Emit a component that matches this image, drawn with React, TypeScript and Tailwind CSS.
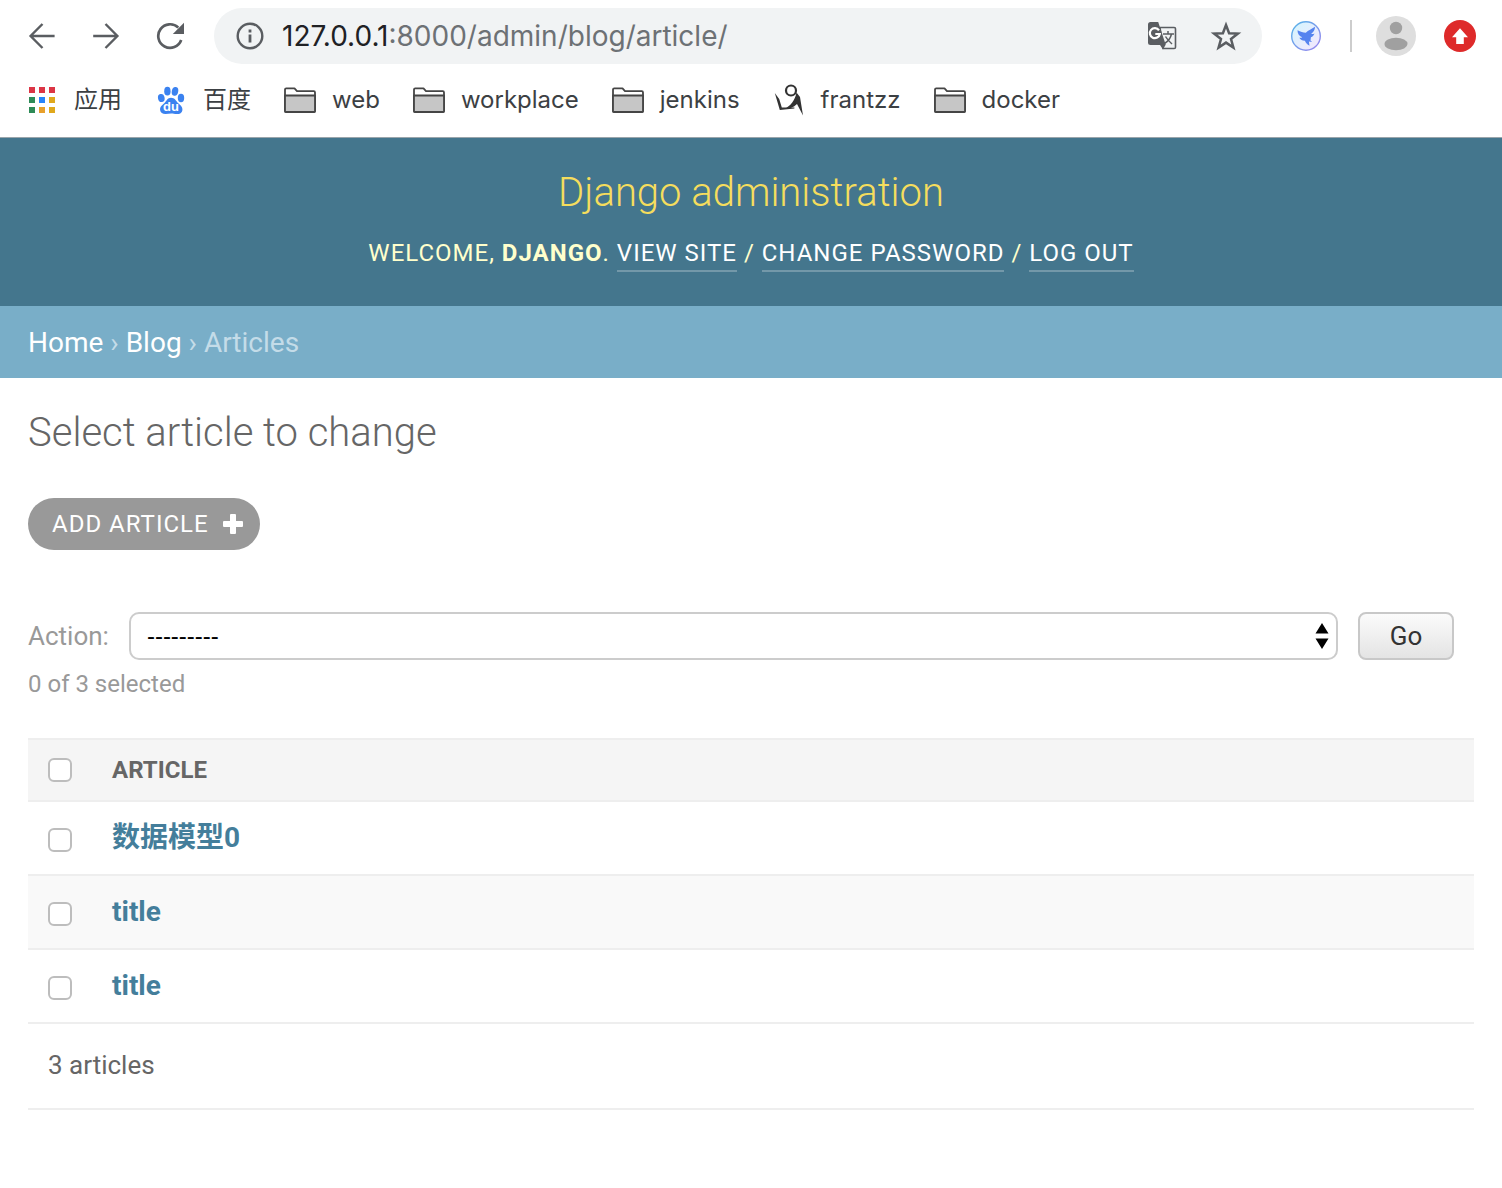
import React from 'react';

const articles = [
  { id: 3, title: '数据模型0' },
  { id: 2, title: 'title' },
  { id: 1, title: 'title' },
];

const appColors = ['#dc3545', '#dc3545', '#dc3545', '#2e8b57', '#2684fc', '#e0a81c', '#2e8b57', '#e8a02c', '#e0a81c'];

function AppsIcon() {
  return (
    <svg viewBox="0 0 32 32" className="h-8 w-8 shrink-0">
      {appColors.map((c, i) => (
        <rect key={i} x={3 + (i % 3) * 10} y={3 + Math.floor(i / 3) * 10} width="6" height="6" fill={c} />
      ))}
    </svg>
  );
}

function BaiduIcon() {
  return (
    <svg viewBox="0 0 32 32" className="h-8 w-8 shrink-0">
      <g fill="#3b82f0">
        <ellipse cx="6.3" cy="14" rx="3.3" ry="4.1" transform="rotate(-12 6.3 14)" />
        <ellipse cx="12.4" cy="7.2" rx="3.2" ry="4.4" />
        <ellipse cx="20" cy="7.4" rx="3.2" ry="4.4" transform="rotate(12 20 7.4)" />
        <ellipse cx="26" cy="14" rx="3.2" ry="4.2" />
        <path d="M16 13.800c3.800 0 5 3.200 7 5.300 2.200 2 4.800 3.700 4.400 7.100-.4 3-3.100 4.100-5.800 3.900-2-.1-3.500-.6-5.400-.6s-3.600.5-5.500.6c-2.900.1-5.300-1.200-5.600-4.100-.3-3.300 2.200-4.900 4.400-6.900 2-2.100 3.100-5.300 6.500-5.300z" />
      </g>
      <text x="16" y="27" textAnchor="middle" fontSize="13" fontWeight="700" fontFamily="Liberation Sans, sans-serif" fill="#fff">du</text>
    </svg>
  );
}

function FolderIcon() {
  return (
    <svg viewBox="0 0 32 32" className="h-8 w-8 shrink-0" stroke="#454545" strokeWidth="1.8" strokeLinejoin="round">
      <path d="M1 27V5.500Q1 4.400 2.200 4.400H10.500L13 7.200H29.800Q31 7.200 31 8.400V27Q31 28 29.800 28H2.200Q1 28 1 27z" fill="#fff" />
      <path d="M1 11.500H31V27Q31 28 29.800 28H2.200Q1 28 1 27z" fill="#c6c6c6" />
    </svg>
  );
}

function FigureIcon() {
  return (
    <svg viewBox="0 0 32 32" className="h-8 w-8 shrink-0" fill="#333">
      <circle cx="18" cy="6.500" r="5" fill="none" stroke="#333" strokeWidth="2.200" />
      <path d="M1.800 9l4.400 6 2.600 8.600 12.600-.2v1.200L6.800 26z" />
      <path d="M23.500 8.500L27 13l3 18.500-6-11.600c-3.400 3.400-7.400 4.800-12.600 5.200 5.800-3 10.600-8.600 12.100-16.600z" />
    </svg>
  );
}

const bookmarks = [
  { label: '应用', Icon: AppsIcon },
  { label: '百度', Icon: BaiduIcon },
  { label: 'web', Icon: FolderIcon },
  { label: 'workplace', Icon: FolderIcon },
  { label: 'jenkins', Icon: FolderIcon },
  { label: 'frantzz', Icon: FigureIcon },
  { label: 'docker', Icon: FolderIcon },
];

function BrowserBar() {
  return (
    <div className="border-b border-[#9aa5ab] bg-white font-['Inter','Noto_Sans_CJK_SC',sans-serif]">
      <div className="flex h-[72px] items-center pr-[26px] pl-7">
        <div className="flex shrink-0 gap-9">
          <button type="button" aria-label="Back">
            <svg viewBox="0 0 28 28" className="h-7 w-7" fill="none" stroke="#5a5d61" strokeWidth="2.4">
              <path d="M26.600 14H3M14.500 2L2.600 14l11.900 12" />
            </svg>
          </button>
          <button type="button" aria-label="Forward">
            <svg viewBox="0 0 28 28" className="h-7 w-7" fill="none" stroke="#5a5d61" strokeWidth="2.4">
              <path d="M1.200 14h24M13.500 2l11.900 12-11.900 12" />
            </svg>
          </button>
          <button type="button" aria-label="Reload">
            <svg viewBox="0 0 28 28" className="h-7 w-7">
              <path d="M25.200 18A11.800 11.800 0 1 1 22.300 5.600" fill="none" stroke="#5a5d61" strokeWidth="2.700" />
              <path d="M28 .8V12H16.800z" fill="#5a5d61" />
            </svg>
          </button>
        </div>

        <div className="ml-[30px] flex h-14 min-w-0 flex-1 items-center rounded-full bg-[#f1f3f4] pr-5 pl-[22px]">
          <svg viewBox="0 0 28 28" className="h-7 w-7 shrink-0" fill="#5a5d61">
            <circle cx="14" cy="14" r="12.3" fill="none" stroke="#5a5d61" strokeWidth="2.4" />
            <path d="M12.600 7.600h2.800v2.800h-2.800zM12.600 12.600h2.800v8h-2.800z" />
          </svg>
          <div className="ml-[18px] flex-1 text-[28px] leading-8 text-[#6d7175]">
            <span className="text-[#202124]">127.0.0.1</span>:8000/admin/blog/article/
          </div>
          <button type="button" aria-label="Translate this page">
            <svg viewBox="0 0 32 32" className="h-8 w-8">
              <path d="M14 7.500h14.200q1.300 0 1.300 1.300v18.400q0 1.300-1.300 1.300H17z" fill="#f1f3f4" stroke="#5a5d61" strokeWidth="1.600" />
              <path d="M4.500 2h7.700l7.600 23H4.500Q2 25 2 22.500v-18Q2 2 4.500 2z" fill="#5a5d61" />
              <path d="M14 25h5.500L17 29.500z" fill="#5a5d61" />
              <path d="M13 10.300A5 5 0 1 0 13.800 14H9.300" fill="none" stroke="#fff" strokeWidth="2.200" />
              <path d="M17 14h11M22 11v3M25.500 14c-1 4.300-3.600 7.500-7 9.500M19.500 16.500c1.700 3 3.800 5 6.500 7.500" fill="none" stroke="#5a5d61" strokeWidth="1.500" />
            </svg>
          </button>
          <button type="button" aria-label="Bookmark this page" className="ml-8">
            <svg viewBox="0 0 32 32" className="h-8 w-8" fill="none" stroke="#5a5d61" strokeWidth="2.5">
              <path d="M16 5l3.100 8.200 8.800.4-6.900 5.400 2.400 8.500-7.400-4.900-7.400 4.900L11 19l-6.900-5.400 8.800-.4z" />
            </svg>
          </button>
        </div>

        <button type="button" aria-label="Bird extension" className="ml-7 shrink-0">
          <svg viewBox="0 0 32 32" className="h-8 w-8">
            <defs>
              <linearGradient id="ring" x1="0" y1="0" x2="1" y2="1">
                <stop offset="0" stopColor="#55b5e8" />
                <stop offset="1" stopColor="#9a83ee" />
              </linearGradient>
              <linearGradient id="disc" x1="0" y1="0" x2="1" y2="1">
                <stop offset="0" stopColor="#d3f6fe" />
                <stop offset="1" stopColor="#f6e6fd" />
              </linearGradient>
            </defs>
            <circle cx="16" cy="16" r="14.3" fill="url(#disc)" stroke="url(#ring)" strokeWidth="1.4" />
            <path d="M7.500 10.200c3 1.800 5.600 2.300 8.300 2.600 2.500-2.400 5.700-3.700 9.300-6-.2 3.400-1.800 5.500-4 7.100 1.200.2 2.400 0 3.400-.5-.8 2-1.900 3.200-3.600 3.900l-.400 3.200 1.600 1.600-3.200-.7.6 4.300c-2.300-1.300-3.800-2.900-4.600-5-2.400.1-4.400-1-5.600-3 1.200.2 2 .1 2.900-.5-2.800-1.300-4.700-3.200-4.700-7z" fill="#5684ef" />
          </svg>
        </button>
        <div className="ml-7 h-8 w-0.5 shrink-0 bg-[#cdcdcd]" />
        <button type="button" aria-label="Profile" className="ml-6 shrink-0">
          <svg viewBox="0 0 40 40" className="h-10 w-10">
            <circle cx="20" cy="20" r="20" fill="#dedede" />
            <circle cx="20" cy="12" r="6.2" fill="#a0a0a0" />
            <ellipse cx="20" cy="28" rx="11.5" ry="6.2" fill="#a0a0a0" />
          </svg>
        </button>
        <button type="button" aria-label="Update available" className="ml-7 shrink-0">
          <svg viewBox="0 0 32 32" className="h-8 w-8">
            <circle cx="16" cy="16" r="16" fill="#de2a2a" />
            <path d="M16 8.300l8 9h-4.200V24h-7.600v-6.700H8z" fill="#fff" />
          </svg>
        </button>
      </div>

      <nav className="flex h-[65px] items-start gap-[33px] px-[26px] pt-3">
        {bookmarks.map(({ label, Icon }) => (
          <a key={label} href="#" className="flex items-center gap-4 text-2xl leading-8 whitespace-nowrap text-[#3c4043]">
            <Icon />
            {label}
          </a>
        ))}
      </nav>
    </div>
  );
}

function SiteHeader() {
  const link = 'border-b-2 border-white/25 pb-[3px] text-white';
  return (
    <header className="bg-[#44768d] pt-[31px] pb-[34px] text-center">
      <h1 className="text-[40px] leading-12 font-light text-[#f5dd5d]">
        <a href="#">Django administration</a>
      </h1>
      <div className="mt-[17px] h-[38px] text-2xl leading-[38px] tracking-[1px] text-[#ffffcc] uppercase">
        Welcome, <strong className="font-bold">Django</strong>.{' '}
        <a href="#" className={link}>View site</a> /{' '}
        <a href="#" className={link}>Change password</a> /{' '}
        <a href="#" className={link}>Log out</a>
      </div>
    </header>
  );
}

function Checkbox({ label }: { label: string }) {
  return (
    <input
      type="checkbox"
      aria-label={label}
      className="block h-6 w-6 appearance-none rounded-md border-2 border-[#bdbdbd] bg-white checked:bg-[#79aec8]"
    />
  );
}

function ArticleTable() {
  return (
    <table className="w-full border-collapse text-left">
      <thead>
        <tr className="h-[62px] border-y-2 border-[#eee] bg-[#f5f5f5] text-2xl text-[#666]">
          <th className="w-16 pl-5"><Checkbox label="Select all articles" /></th>
          <th className="pl-5 font-bold">ARTICLE</th>
        </tr>
      </thead>
      <tbody>
        {articles.map((a) => (
          <tr key={a.id} className="h-[74px] border-b-2 border-[#eee] even:bg-[#f9f9f9]">
            <td className="pt-1 pl-5"><Checkbox label={`Select ${a.title}`} /></td>
            <th className="pl-5 text-[28px] leading-8 font-bold text-[#447e9b]">
              <a href="#">{a.title}</a>
            </th>
          </tr>
        ))}
      </tbody>
    </table>
  );
}

export default function App() {
  return (
    <div className="min-h-screen bg-white font-['Roboto','Noto_Sans_CJK_SC',sans-serif]">
      <BrowserBar />
      <SiteHeader />

      <nav className="bg-[#79aec8] pt-[21px] pb-[19px] px-7 text-[28px] leading-8 text-[#c4dce8]">
        <a href="#" className="text-white">Home</a> › <a href="#" className="text-white">Blog</a> › Articles
      </nav>

      <main className="px-7 pt-[31px]">
        <h2 className="text-[40px] leading-12 font-light text-[#666]">Select article to change</h2>

        <a href="#" className="mt-[41px] inline-flex h-[52px] items-center gap-[13px] rounded-full bg-[#999] pr-4 pl-6 text-2xl tracking-[1px] text-white">
          ADD ARTICLE
          <svg viewBox="0 0 22 22" className="h-[22px] w-[22px]" fill="#fff">
            <path d="M9 1h4q1 0 1 1v6h6q1 0 1 1v4q0 1-1 1h-6v6q0 1-1 1H9q-1 0-1-1v-6H2q-1 0-1-1V9q0-1 1-1h6V2q0-1 1-1z" />
          </svg>
        </a>

        <form className="mt-[62px] flex h-12 items-center pr-5" onSubmit={(e) => e.preventDefault()}>
          <label htmlFor="action" className="text-[26px] text-[#999]">Action:</label>
          <div className="relative ml-5 flex-1">
            <select
              id="action"
              className="h-12 w-full appearance-none rounded-[10px] border-2 border-[#ccc] bg-white px-4 font-['Liberation_Sans',sans-serif] text-2xl text-black"
            >
              <option>---------</option>
              <option>Delete selected articles</option>
            </select>
            <svg viewBox="0 0 14 28" className="pointer-events-none absolute top-[10px] right-[9px] h-7 w-[14px]">
              <path d="M7 1l6.500 10.500H.500zM7 27L.500 16.500h13z" />
            </svg>
          </div>
          <button type="submit" className="ml-5 h-12 w-24 rounded-lg border-2 border-[#c8c8c8] bg-linear-to-b from-[#fbfbfb] to-[#e4e4e4] text-[26px] text-[#333]">
            Go
          </button>
        </form>
        <p className="mt-2 mb-[38px] text-2xl leading-8 text-[#999]">0 of 3 selected</p>

        <ArticleTable />
        <p className="border-b-2 border-[#eee] pt-[25px] pb-[27px] px-5 text-[26px] leading-8 text-[#666]">3 articles</p>
      </main>
    </div>
  );
}
